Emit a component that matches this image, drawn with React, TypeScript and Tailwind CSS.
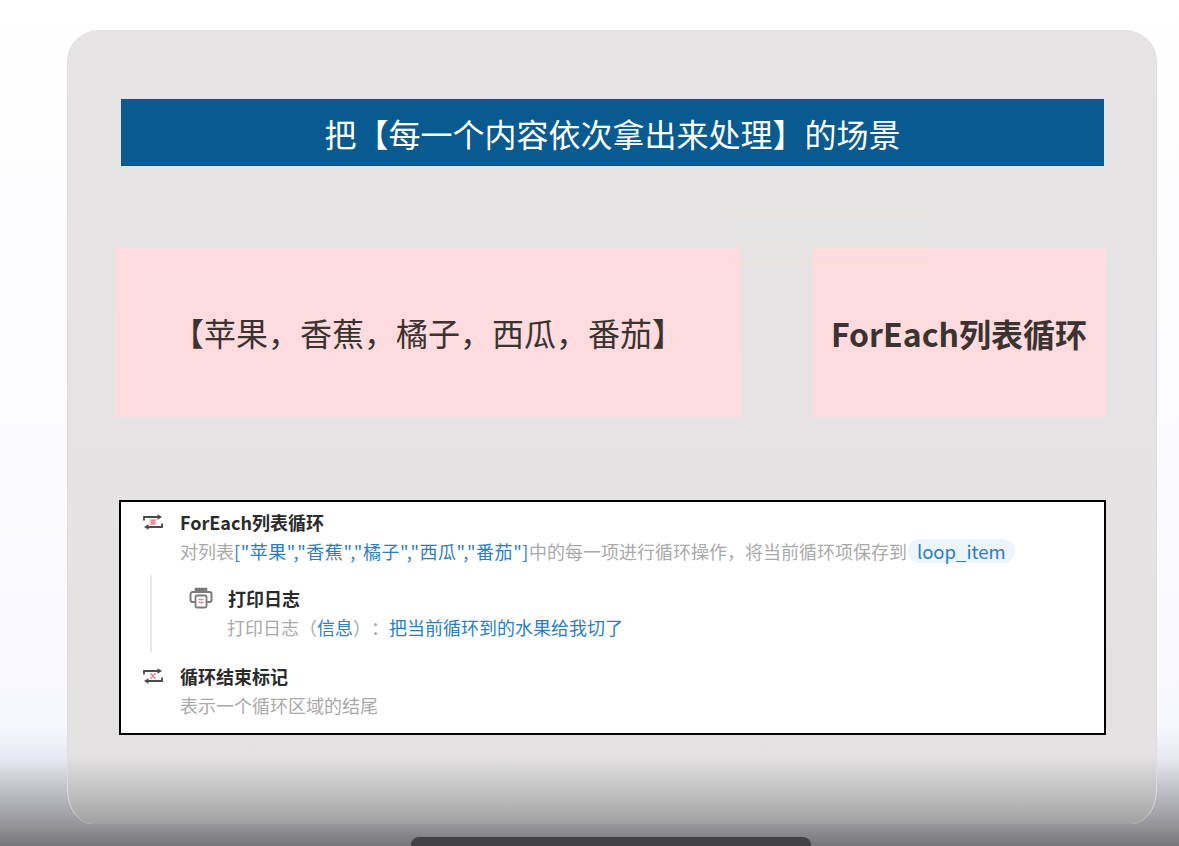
const fontStack = "font-['Noto_Sans_CJK_SC','Noto_Sans',sans-serif]";

function LoopIcon({ mark }: { mark: 'list' | 'close' }) {
    return (
        <svg width="20" height="16" viewBox="0 0 20 16" fill="none" className="shrink-0">
            <path d="M1 6.5V3h15" stroke="#4a4a4a" strokeWidth="1.8" />
            <path d="M14.5 0.2L19 3l-4.5 2.8z" fill="#4a4a4a" />
            <path d="M19 9.5V13H4" stroke="#4a4a4a" strokeWidth="1.8" />
            <path d="M5.5 10.2L1 13l4.5 2.8z" fill="#4a4a4a" />
            {mark === 'list' ? (
                <>
                    <rect x="6.5" y="5" width="7" height="6" fill="#f6c3c8" />
                    <path d="M8 6.3h4M8 8h4M8 9.7h4" stroke="#e06a75" strokeWidth="0.9" />
                </>
            ) : (
                <path d="M7.5 5.3l5 5.4M12.5 5.3l-5 5.4" stroke="#e58a92" strokeWidth="1.6" />
            )}
        </svg>
    );
}

function PrintIcon() {
    return (
        <svg width="24" height="22" viewBox="0 0 24 22" fill="none" className="shrink-0">
            <path d="M6.5 5V1.5h11V5" fill="#7a7a7a" stroke="#7a7a7a" strokeWidth="1.6" />
            <path
                d="M6 15H3.5A2 2 0 0 1 1.5 13V7a2 2 0 0 1 2-2h17a2 2 0 0 1 2 2v6a2 2 0 0 1-2 2H18"
                stroke="#7a7a7a"
                strokeWidth="2"
            />
            <rect x="6.5" y="8.5" width="11" height="12" rx="1.5" fill="#fff" stroke="#7a7a7a" strokeWidth="1.8" />
            <path d="M9.5 12.5h5M9.5 15.5h5" stroke="#d98a90" strokeWidth="1.3" />
        </svg>
    );
}

export default function App() {
    return (
        <div
            className={`relative flex h-[846px] w-[1179px] flex-col overflow-hidden bg-[linear-gradient(to_bottom,#ffffff_0%,#fbfbff_50%,#f7f7fe_85.8%,#e8e8f2_89.7%,#bcbcc4_93.7%,#949499_97.6%,#77777a_100%)] pl-[67px] pt-[30px] ${fontStack}`}
        >
            {/* Slide */}
            <main className="h-[794px] w-[1090px] shrink-0 rounded-t-[32px] rounded-b-[26px_34px] border-x border-[#dedcdd] bg-[linear-gradient(to_bottom,#e6e4e5_0%,#e3e1e2_91.5%,#d0cfcf_94%,#c0bfbf_96.3%,#a0a0a0_100%)] pt-[69px]">
                {/* Title */}
                <h1 className="ml-[53px] flex h-[67px] w-[983px] items-center justify-center bg-[#075b90] text-[32px] font-normal text-white">
                    把【每一个内容依次拿出来处理】的场景
                </h1>

                {/* Pink blocks */}
                <section className="ml-[47px] mt-[82px] flex h-[169px] gap-[71px]">
                    <div className="flex w-[626px] items-center justify-center bg-[#fddbdf] pb-[2px] text-[32px] text-[#3a3330]">
                        【苹果，香蕉，橘子，西瓜，番茄】
                    </div>
                    <div className="flex w-[294px] items-center justify-center bg-[#fddbdf] text-[32px] font-bold text-[#3a3330]">
                        ForEach列表循环
                    </div>
                </section>

                {/* Flow list */}
                <section className="ml-[51px] mt-[83px] h-[235px] w-[987px] border-2 border-black bg-white pl-[22px] pt-[8px] text-[18px]">
                    <div className="flex items-center gap-[17px]">
                        <LoopIcon mark="list" />
                        <h2 className="text-[18px] leading-[24px] font-bold text-[#2b2b2b]">ForEach列表循环</h2>
                    </div>
                    <p className="ml-[37px] mt-[5px] flex items-center leading-[24px] text-[#a9a9ab]">
                        对列表
                        <span className="tracking-[0.55px] text-[#2a7fc4]">["苹果","香蕉","橘子","西瓜","番茄"]</span>
                        中的每一项进行循环操作，将当前循环项保存到
                        <span className="ml-[1px] rounded-full bg-[#edf4fc] px-[9px] text-[18.5px] leading-[24px] text-[#2a7fc4]">
                            loop_item
                        </span>
                    </p>

                    <div className="ml-[7px] mt-[12px] h-[77px] border-l-2 border-[#e8e8e8] pl-[37px] pt-[11px]">
                        <div className="flex items-center gap-[15px]">
                            <PrintIcon />
                            <h2 className="text-[18px] leading-[24px] font-bold text-[#2b2b2b]">打印日志</h2>
                        </div>
                        <p className="ml-[38px] mt-[5px] leading-[24px] text-[#a9a9ab] [text-spacing-trim:space-all]">
                            打印日志（<span className="text-[#2a7fc4]">信息</span>）：
                            <span className="text-[#2a7fc4]">把当前循环到的水果给我切了</span>
                        </p>
                    </div>

                    <div className="mt-[12px] flex items-center gap-[17px]">
                        <LoopIcon mark="close" />
                        <h2 className="text-[18px] leading-[24px] font-bold text-[#2b2b2b]">循环结束标记</h2>
                    </div>
                    <p className="ml-[37px] mt-[5px] leading-[24px] text-[#a9a9ab]">表示一个循环区域的结尾</p>
                </section>
            </main>

            {/* Bottom bar */}
            <div className="ml-[344px] mt-[13px] h-[20px] w-[400px] shrink-0 rounded-t-[8px] bg-[#434345]" />

            {/* Faint leftover lines */}
            <div className="absolute left-[727px] top-[213px] h-[49px] w-[203px] border-y border-[#f3e0d0]">
                <div className="mt-[15px] h-[16px] border-y border-[#f0e2d8]" />
            </div>
        </div>
    );
}
